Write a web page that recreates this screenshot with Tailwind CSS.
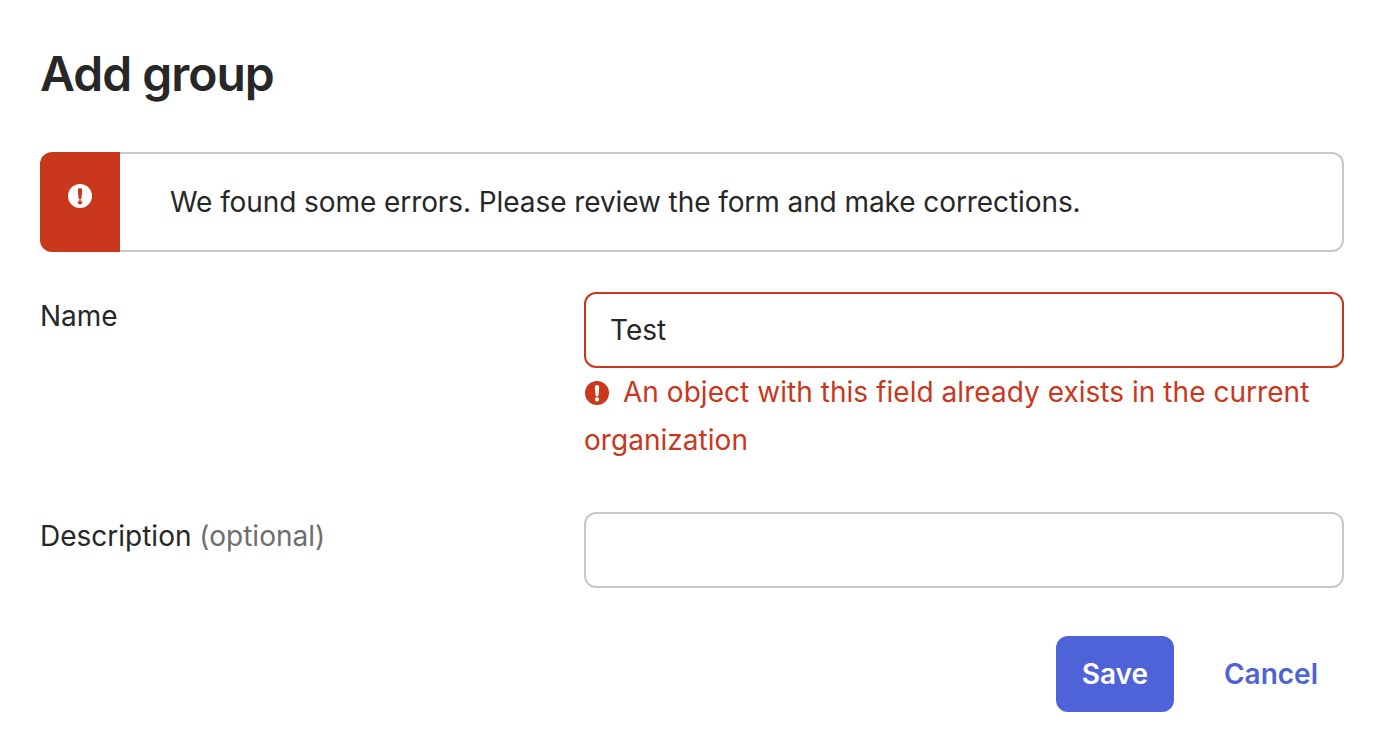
<!DOCTYPE html>
<html lang="en">

<head>
    <meta charset="UTF-8">
    <title>Add group</title>
    <script src="https://cdn.jsdelivr.net/npm/@tailwindcss/browser@4"></script>
</head>

<body class="bg-white font-['Inter',sans-serif] text-[#272727] text-[28px]">
    <div class="w-[1382px] h-[752px] overflow-hidden pl-10 pr-[38px] pt-[44px]">
        <h1 class="text-[48px] leading-[60px] font-semibold tracking-[-1px]">Add group</h1>

        <div class="mt-[48px] flex h-[100px]">
            <div class="w-[80px] h-[100px] rounded-l-xl bg-[#c9371c] flex justify-center pt-[32px] shrink-0">
                <svg class="w-6 h-6" viewBox="0 0 24 24"><circle cx="12" cy="12" r="12" fill="#fff"/><path d="M9.8 6.2a2.2 2.2 0 0 1 4.4 0L13.5 14a1.5 1.5 0 0 1-3 0z" fill="#c9371c"/><circle cx="12" cy="18.4" r="2.1" fill="#c9371c"/></svg>
            </div>
            <p class="flex-1 rounded-r-xl border-2 border-l-0 border-[#c9c9c9] pl-[50px] leading-[96px] tracking-[-0.08px]">We found some errors. Please review the form and make corrections.</p>
        </div>

        <form class="mt-[40px]">
            <div class="flex">
                <label class="w-[544px] leading-[48px] shrink-0">Name</label>
                <div class="flex-1">
                    <input type="text" value="Test" class="w-full h-[76px] rounded-xl border-2 border-[#c9371c] px-[24px] outline-none text-[28px] text-[#272727]">
                    <p class="leading-[48px] text-[#c9371c] tracking-[0.04px]">
                        <svg class="inline-block w-6 h-6 ml-[1px] mr-[14px] align-[-3px]" viewBox="0 0 24 24"><circle cx="12" cy="12" r="12" fill="#c9371c"/><path d="M9.8 6.2a2.2 2.2 0 0 1 4.4 0L13.5 14a1.5 1.5 0 0 1-3 0z" fill="#fff"/><circle cx="12" cy="18.4" r="2.1" fill="#fff"/></svg>An object with this field already exists in the current organization
                    </p>
                </div>
            </div>
            <div class="flex mt-[48px]">
                <label class="w-[544px] leading-[48px] shrink-0">Description <span class="text-[#6e6e6e]">(optional)</span></label>
                <input type="text" class="flex-1 h-[76px] rounded-xl border-2 border-[#c9c9c9] px-[24px] outline-none">
            </div>
            <div class="flex justify-end items-center mt-[48px]">
                <button type="button" class="w-[118px] h-[76px] rounded-xl bg-[#4f63d9] text-white font-semibold">Save</button>
                <button type="button" class="ml-[50px] mr-[26px] text-[#4f63d9] font-semibold">Cancel</button>
            </div>
        </form>
    </div>
</body>

</html>
